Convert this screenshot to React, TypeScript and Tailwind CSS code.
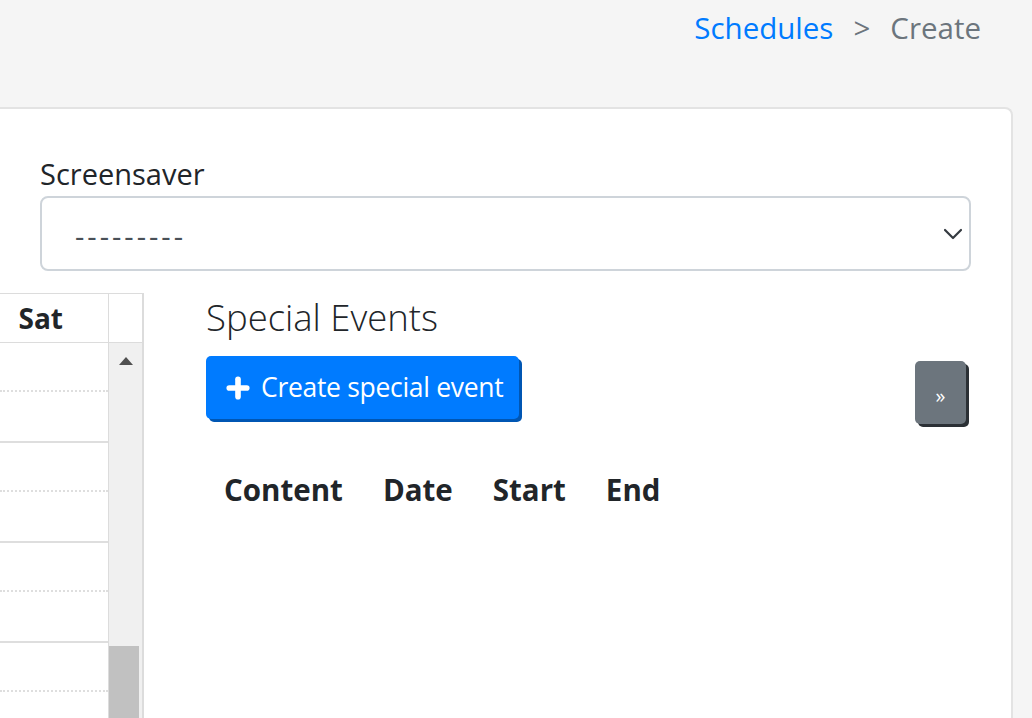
import { Plus } from "lucide-react";

function CalendarColumn() {
  const rows = [0, 1, 2, 3];
  return (
    <div className="flex w-[144px] shrink-0 border-t border-r-2 border-[#dcdcdc]">
      <div className="w-[109px] border-r border-[#dcdcdc]">
        <div className="h-[49px] border-b border-[#dcdcdc] flex items-center justify-end pr-[45px] text-[28px] font-bold text-[#212529]">
          Sat
        </div>
        {rows.map((r) => (
          <div key={r} className="h-[100px] border-b-2 border-[#dedede] flex flex-col">
            <div className="h-[49px] border-b-2 border-dotted border-[#dedede]" />
            <div className="flex-1" />
          </div>
        ))}
      </div>
      <div className="w-[33px] flex flex-col">
        <div className="h-[49px] border-b border-[#dcdcdc]" />
        <div className="flex-1 bg-[#f0f0f0] flex flex-col">
          <div className="h-[303px] flex justify-center pt-[14px]">
            <div className="w-0 h-0 border-l-[7px] border-r-[7px] border-b-[8px] border-l-transparent border-r-transparent border-b-[#505050]" />
          </div>
          <div className="w-[30px] h-[80px] bg-[#c1c1c1]" />
        </div>
      </div>
    </div>
  );
}

export default function App() {
  return (
    <div className="min-h-screen h-[718px] overflow-hidden bg-[#f5f5f5] font-['Open_Sans',sans-serif] text-[#212529]">
      <div className="h-[107px] flex justify-end items-start pr-[51px] pt-[6px] text-[29.5px]">
        <a href="#" className="text-[#007bff]">
          Schedules
        </a>
        <span className="text-[#6c757d] px-[20px]">&gt;</span>
        <span className="text-[#6c757d]">Create</span>
      </div>

      <div className="mr-[19px] h-[611px] bg-white border-t-2 border-r-2 border-[#e3e3e3] rounded-tr-[8px] overflow-hidden">
        <div className="px-[40px] pt-[45px]">
          <label className="block text-[29px] leading-[40px] mb-[2px]">Screensaver</label>
          <div className="h-[75px] border-2 border-[#ced4da] rounded-[8px] flex items-center justify-between pl-[33px] pr-[5px]">
            <span className="text-[29px] text-[#495057] tracking-[3px] pt-[5px]">---------</span>
            <svg width="20" height="12" viewBox="0 0 20 12" fill="none" className="mr-[1px]">
              <path d="M2 2l8 8 8-8" stroke="#343a40" strokeWidth="2.2" strokeLinecap="round" strokeLinejoin="round" />
            </svg>
          </div>
        </div>

        <div className="flex mt-[22px]">
          <CalendarColumn />
          <div className="ml-[62px] w-[766px]">
            <h4 className="text-[36.5px] font-light leading-[48px] mb-[15px]">Special Events</h4>
            <div className="flex justify-between items-start">
              <button className="h-[63px] pl-[17px] pr-[16px] flex items-center gap-[8px] bg-[#007bff] text-white rounded-[5px] text-[26.5px] tracking-[-0.3px] shadow-[3px_3px_0_#0056b3]">
                <Plus size={30} strokeWidth={4.5} />
                Create special event
              </button>
              <button className="mt-[5px] mr-[6px] w-[51px] h-[63px] pt-[6px] bg-[#6c757d] text-white rounded-[5px] text-[20px] shadow-[3px_3px_0_#2b3035] flex items-center justify-center">
                »
              </button>
            </div>
            <table className="mt-[44px]">
              <thead>
                <tr className="text-[29.5px] font-bold">
                  <th className="pl-[18px] pr-[20px] text-left">Content</th>
                  <th className="px-[20px] text-left">Date</th>
                  <th className="px-[20px] text-left">Start</th>
                  <th className="px-[20px] text-left">End</th>
                </tr>
              </thead>
            </table>
          </div>
        </div>
      </div>
    </div>
  );
}
